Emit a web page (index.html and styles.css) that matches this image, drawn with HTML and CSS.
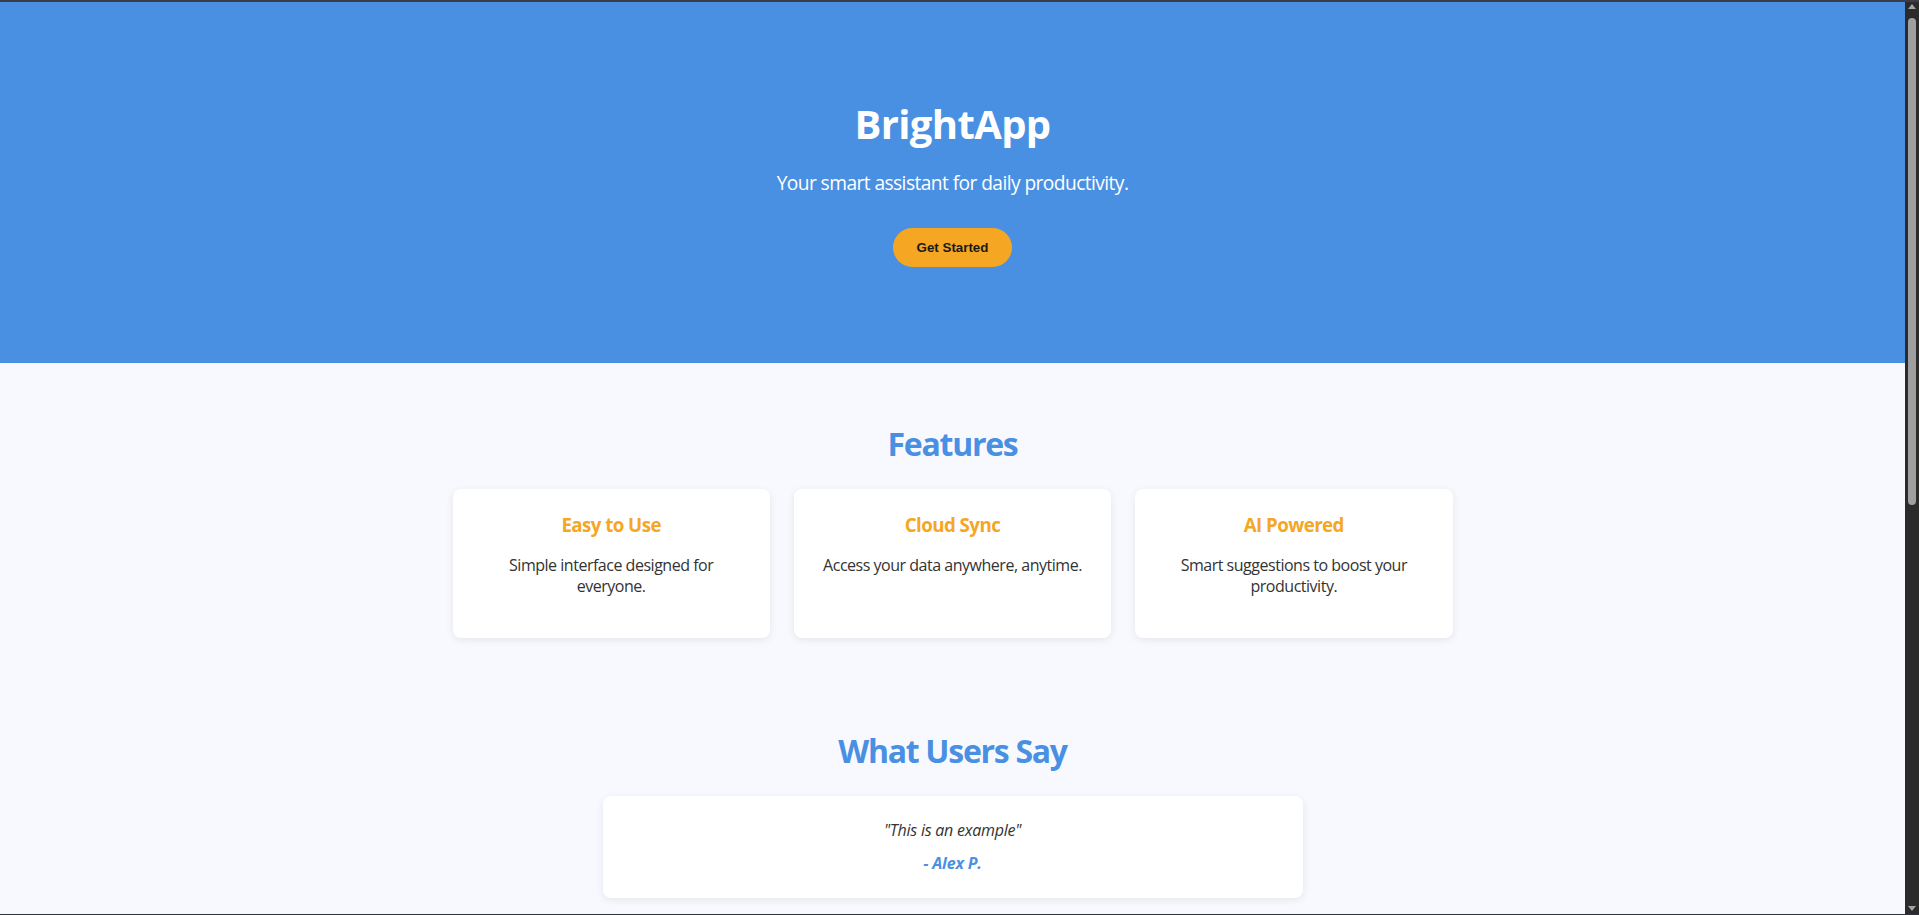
FILE: index.html
```html
<!DOCTYPE html>
<html lang="en">
<head>
<meta charset="utf-8">
<title>BrightApp</title>
<link rel="stylesheet" href="styles.css">
</head>
<body>
<div class="frame">
  <div class="page">
    <header class="hero">
      <h1 class="hero-title">BrightApp</h1>
      <p class="hero-sub">Your smart assistant for daily productivity.</p>
      <button class="cta">Get Started</button>
    </header>

    <section class="features">
      <h2 class="section-title">Features</h2>
      <div class="feature-grid">
        <div class="card">
          <h3 class="card-title">Easy to Use</h3>
          <p class="card-text">Simple interface designed for everyone.</p>
        </div>
        <div class="card">
          <h3 class="card-title">Cloud Sync</h3>
          <p class="card-text">Access your data anywhere, anytime.</p>
        </div>
        <div class="card">
          <h3 class="card-title">AI Powered</h3>
          <p class="card-text">Smart suggestions to boost your productivity.</p>
        </div>
      </div>
    </section>

    <section class="testimonials">
      <h2 class="section-title">What Users Say</h2>
      <div class="tcard">
        <p class="quote">"This is an example"</p>
        <p class="author">- Alex P.</p>
      </div>
    </section>
  </div>
  <div class="scrollbar">
    <div class="sb-arrow sb-up"></div>
    <div class="sb-thumb"></div>
    <div class="sb-track"></div>
    <div class="sb-arrow sb-down"></div>
  </div>
</div>
</body>
</html>
```

FILE: styles.css
```css
* { box-sizing: border-box; }

html, body {
  margin: 0;
  padding: 0;
  height: 100%;
}

body {
  font-family: "Open Sans", "Noto Sans", sans-serif;
  color: #333;
  background: #f8f9fe;
  letter-spacing: -0.03em;
}

.frame {
  display: flex;
  height: 100vh;
  border-top: 2px solid #3b3c46;
  border-bottom: 1px solid #2e3440;
  overflow: hidden;
}

.page {
  flex: 1;
  min-width: 0;
  overflow: hidden;
  background: #f8f9fe;
}

/* Hero */
.hero {
  background: #4a90e2;
  color: #fff;
  text-align: center;
  padding: 98px 20px 96px;
}

.hero-title {
  margin: 0 0 21px;
  font-size: 40px;
  line-height: 48px;
  font-weight: 700;
  letter-spacing: -0.016em;
}

.hero-sub {
  margin: 0 0 30px;
  font-size: 19.2px;
  line-height: 28.8px;
  letter-spacing: -0.03em;
}

.cta {
  display: inline-block;
  background: #f5a623;
  color: #1a1a1a;
  border: none;
  border-radius: 25px;
  padding: 12px 24px;
  font-family: "Liberation Sans", Arial, sans-serif;
  font-size: 13.333px;
  font-weight: 700;
  line-height: normal;
  letter-spacing: 0;
}

/* Sections */
.features {
  padding: 62px 20px 0;
  text-align: center;
}

.testimonials {
  padding: 94px 20px 0;
  text-align: center;
}

.section-title {
  margin: 0 0 26px;
  color: #4a90e2;
  font-size: 32px;
  line-height: 38.4px;
  font-weight: 700;
  letter-spacing: -0.04em;
}

.feature-grid {
  display: grid;
  grid-template-columns: repeat(3, 1fr);
  gap: 24px;
  max-width: 1000px;
  margin: 0 auto;
}

.card {
  background: #fff;
  border-radius: 8px;
  padding: 24px;
  box-shadow: 0 2px 8px rgba(0, 0, 0, 0.08);
}

.card-title {
  margin: 0 0 17px;
  color: #f5a623;
  font-size: 18.72px;
  line-height: 24.3px;
  font-weight: 700;
  letter-spacing: -0.03em;
}

.card-text {
  margin: 0 0 16px;
  font-size: 16px;
  line-height: 21.6px;
  color: #333;
  letter-spacing: -0.03em;
}

.tcard {
  max-width: 700px;
  margin: 0 auto;
  background: #fff;
  border-radius: 8px;
  padding: 24px;
  box-shadow: 0 2px 8px rgba(0, 0, 0, 0.08);
}

.quote {
  margin: 0 0 11px;
  font-style: italic;
  font-size: 16px;
  line-height: 21.6px;
  color: #333;
  letter-spacing: -0.015em;
}

.author {
  margin: 0;
  font-style: italic;
  font-weight: 700;
  font-size: 16px;
  line-height: 21.6px;
  color: #4a90e2;
  letter-spacing: -0.01em;
}

/* Browser scrollbar as seen in the screenshot */
.scrollbar {
  width: 14px;
  flex: 0 0 14px;
  background: #2b2b2b;
  display: flex;
  flex-direction: column;
  align-items: center;
  padding: 2px 0 3px;
}

.sb-arrow {
  width: 0;
  height: 0;
  border-left: 4px solid transparent;
  border-right: 4px solid transparent;
}

.sb-up {
  border-bottom: 5px solid #a3a3a3;
  margin-bottom: 9px;
}

.sb-down {
  border-top: 5px solid #a3a3a3;
}

.sb-thumb {
  width: 8px;
  height: 487px;
  border-radius: 4px;
  background: #9f9f9f;
}

.sb-track {
  flex: 1;
}
```
